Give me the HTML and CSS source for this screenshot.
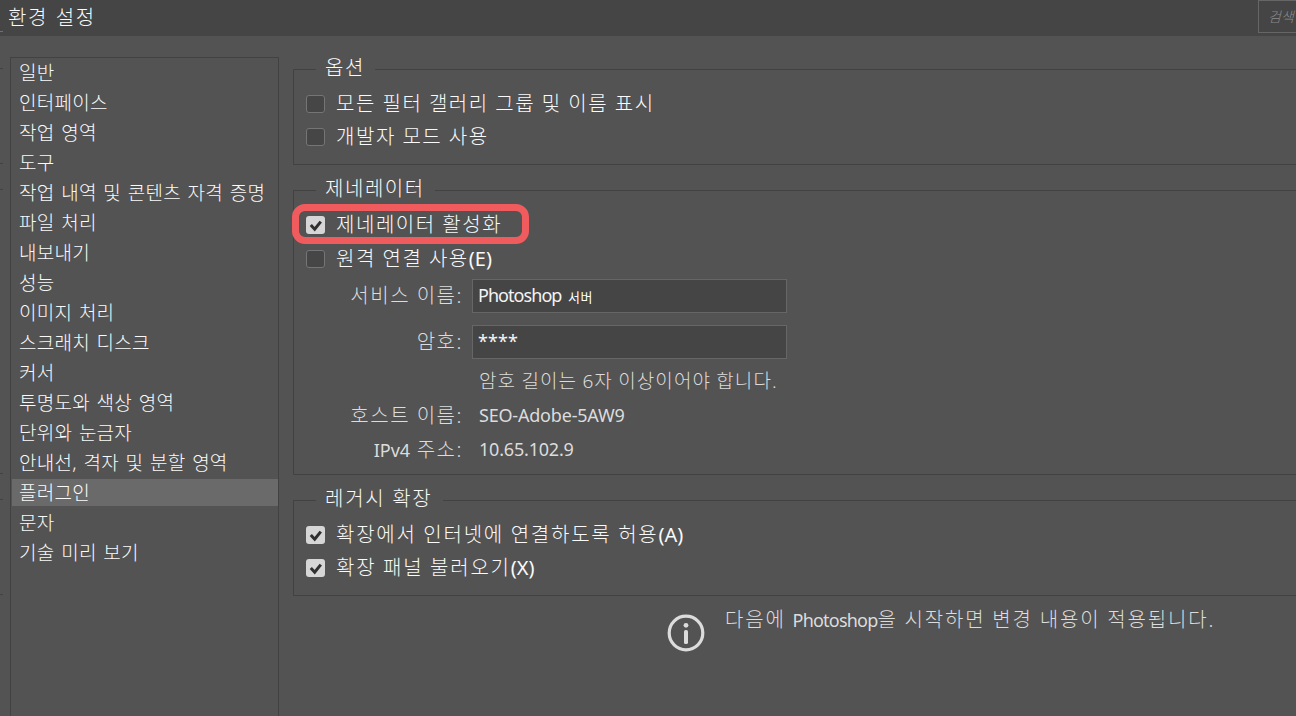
FILE: index.html
```html
<!DOCTYPE html>
<html lang="ko">
<head>
    <meta charset="utf-8">
    <title>환경 설정</title>
    <link rel="stylesheet" href="styles.css">
</head>
<body>
    <svg class="defs" width="0" height="0">
        <symbol id="check" viewBox="0 0 19 18">
            <path d="M4.8 9 8.7 13.2 14.8 5.6" fill="none" stroke="#303030" stroke-width="3"/>
        </symbol>
    </svg>

    <div class="titlebar">
        <h1>환경 설정</h1>
        <div class="search">검색</div>
    </div>

    <div class="content">
        <div class="edge">
            <div class="edge-group"></div>
            <div class="edge-group edge-tall"></div>
            <div class="edge-group"></div>
        </div>

        <ul class="sidebar">
            <li>일반</li>
            <li>인터페이스</li>
            <li>작업 영역</li>
            <li>도구</li>
            <li>작업 내역 및 콘텐츠 자격 증명</li>
            <li>파일 처리</li>
            <li>내보내기</li>
            <li>성능</li>
            <li>이미지 처리</li>
            <li>스크래치 디스크</li>
            <li>커서</li>
            <li>투명도와 색상 영역</li>
            <li>단위와 눈금자</li>
            <li>안내선, 격자 및 분할 영역</li>
            <li class="selected">플러그인</li>
            <li>문자</li>
            <li>기술 미리 보기</li>
        </ul>

        <div class="main">
            <fieldset class="group">
                <legend>옵션</legend>
                <div class="checks">
                    <div class="check"><span class="box"></span><span>모든 필터 갤러리 그룹 및 이름 표시</span></div>
                    <div class="check"><span class="box"></span><span>개발자 모드 사용</span></div>
                </div>
            </fieldset>

            <fieldset class="group generator">
                <legend>제네레이터</legend>
                <div class="checks">
                    <div class="check marked"><span class="box checked"><svg><use href="#check"/></svg></span><span>제네레이터 활성화</span></div>
                    <div class="check"><span class="box"></span><span>원격 연결 사용<span class="key">(E)</span></span></div>
                </div>
                <div class="form">
                    <div class="label">서비스 이름:</div>
                    <div class="input">Photoshop <small>서버</small></div>
                    <div class="label">암호:</div>
                    <div class="input password">****</div>
                </div>
                <div class="form info-rows">
                    <div class="label"></div>
                    <div class="value hint">암호 길이는 6자 이상이어야 합니다.</div>
                    <div class="label">호스트 이름:</div>
                    <div class="value">SEO-Adobe-5AW9</div>
                    <div class="label"><span class="latin">IPv4</span> 주소:</div>
                    <div class="value">10.65.102.9</div>
                </div>
            </fieldset>

            <fieldset class="group legacy">
                <legend>레거시 확장</legend>
                <div class="checks">
                    <div class="check"><span class="box checked"><svg><use href="#check"/></svg></span><span>확장에서 인터넷에 연결하도록 허용<span class="key">(A)</span></span></div>
                    <div class="check"><span class="box checked"><svg><use href="#check"/></svg></span><span>확장 패널 불러오기<span class="key">(X)</span></span></div>
                </div>
            </fieldset>

            <div class="notice">
                <svg width="38" height="38" viewBox="0 0 38 38">
                    <circle cx="19" cy="19" r="16.8" fill="none" stroke="#dcdcdc" stroke-width="3.2"/>
                    <circle cx="19" cy="11.3" r="2.4" fill="#dcdcdc"/>
                    <rect x="17" y="16" width="4" height="14" rx="1.6" fill="#dcdcdc"/>
                </svg>
                <p>다음에 <span class="latin product">Photoshop</span>을 시작하면 변경 내용이 적용됩니다.</p>
            </div>
        </div>
    </div>
</body>
</html>
```
FILE: styles.css
```css
* {
    box-sizing: border-box;
}
body {
    margin: 0;
    height: 716px;
    overflow: hidden;
    display: flex;
    flex-direction: column;
    background-color: #535353;
    color: #fafafa;
    font-family: "Noto Sans", "Noto Sans CJK KR", sans-serif;
    font-weight: 300;
    font-size: 20px;
    line-height: 24px;
    white-space: nowrap;
}
.defs {
    position: absolute;
}
.titlebar {
    display: flex;
    justify-content: space-between;
    height: 36px;
    flex-shrink: 0;
    background-color: #454545;
}
.titlebar::before {
    content: "";
    width: 3px;
    height: 1px;
    margin-top: 31px;
    background-color: #707070;
}
.titlebar h1 {
    flex: 1;
    margin: 0;
    padding: 6px 0 0 5px;
    font-size: 20px;
    font-weight: 300;
    letter-spacing: 1.6px;
    word-spacing: 1px;
}
.search {
    width: 38px;
    height: 33px;
    padding: 4px 0 0 9px;
    overflow: hidden;
    border: 1px solid #666;
    border-right: none;
    color: #8c8c8c;
    font-size: 14px;
    font-style: italic;
}
.content {
    display: flex;
    flex: 1;
    padding-top: 21px;
}
/* strip of the window behind */
.edge {
    width: 3px;
    margin-right: 7px;
    padding-top: 11px;
}
.edge-group {
    height: 96px;
    margin-bottom: 25px;
    border-top: 1px solid #424242;
    border-bottom: 1px solid #424242;
}
.edge-tall {
    height: 285px;
}
.sidebar {
    display: flex;
    flex-direction: column;
    gap: 3px;
    width: 269px;
    margin: 0;
    padding: 1px 0 0 1px;
    list-style: none;
    border: 1px solid #424242;
    border-bottom: none;
    font-size: 19px;
    letter-spacing: 0.25px;
    word-spacing: 1.5px;
}
.sidebar li {
    height: 27px;
    padding-left: 7px;
    line-height: 28px;
}
.sidebar .selected {
    background-color: #6a6a6a;
}
.main {
    flex: 1;
    margin-left: 14px;
    letter-spacing: 1.55px;
    word-spacing: -0.2px;
}
.group {
    height: 108px;
    margin: 0 0 13px;
    padding: 0 0 0 12px;
    border: 1px solid #424242;
    border-right: none;
}
.generator {
    height: 297px;
}
.legacy {
    letter-spacing: 1.75px;
}
legend {
    height: 24px;
    margin-left: 10px;
    padding: 0 10px 0 9px;
    line-height: 22px;
}
.checks {
    display: flex;
    flex-direction: column;
    gap: 15px;
    padding-top: 14px;
}
.generator .checks {
    gap: 16px;
}
.check {
    position: relative;
    display: flex;
    align-items: center;
    gap: 11px;
    height: 18px;
}
.box {
    width: 19px;
    height: 18px;
    border: 1px solid #757575;
    border-radius: 3px;
    background-color: #464646;
}
.box.checked {
    border: none;
    background-color: #d6d6d6;
}
.box svg {
    display: block;
    width: 19px;
    height: 18px;
}
.key {
    letter-spacing: 0;
    font-size: 20px;
    font-weight: 400;
}
/* red callout around the option */
.marked::after {
    content: "";
    box-sizing: border-box;
    position: absolute;
    left: -14px;
    top: -12px;
    width: 237px;
    height: 40px;
    border: 7px solid #f05b5e;
    border-radius: 13px;
}
.form {
    display: grid;
    grid-template-columns: 157px 315px;
    column-gap: 9px;
    row-gap: 12px;
    margin-top: 11px;
    line-height: 34px;
    color: #dcdcdc;
}
.info-rows {
    row-gap: 0;
    margin-top: 6px;
}
.label {
    text-align: right;
}
.input {
    height: 34px;
    padding-left: 5px;
    border: 1px solid #666;
    background-color: #454545;
    color: #f4f4f4;
    font-size: 18px;
    font-weight: 400;
    letter-spacing: -0.95px;
    line-height: 31px;
}
.input small {
    margin-left: 3px;
    color: #fff;
    font-size: 13px;
    letter-spacing: 0.6px;
}
.password {
    letter-spacing: 0.1px;
    line-height: 30px;
}
.value {
    height: 34px;
    padding-left: 7px;
    font-size: 18px;
    font-weight: 400;
    letter-spacing: -0.2px;
    line-height: 33px;
}
.hint {
    font-size: 19px;
    font-weight: 300;
    letter-spacing: 1.1px;
    word-spacing: -0.8px;
}
.latin {
    font-size: 18px;
    font-weight: 400;
    letter-spacing: 0;
}
.product {
    letter-spacing: -0.8px;
}
.notice {
    display: flex;
    align-items: flex-start;
    gap: 20px;
    padding: 5px 0 0 374px;
    color: #dcdcdc;
    letter-spacing: 1.85px;
}
.notice p {
    margin: -6px 0 0;
}
```
